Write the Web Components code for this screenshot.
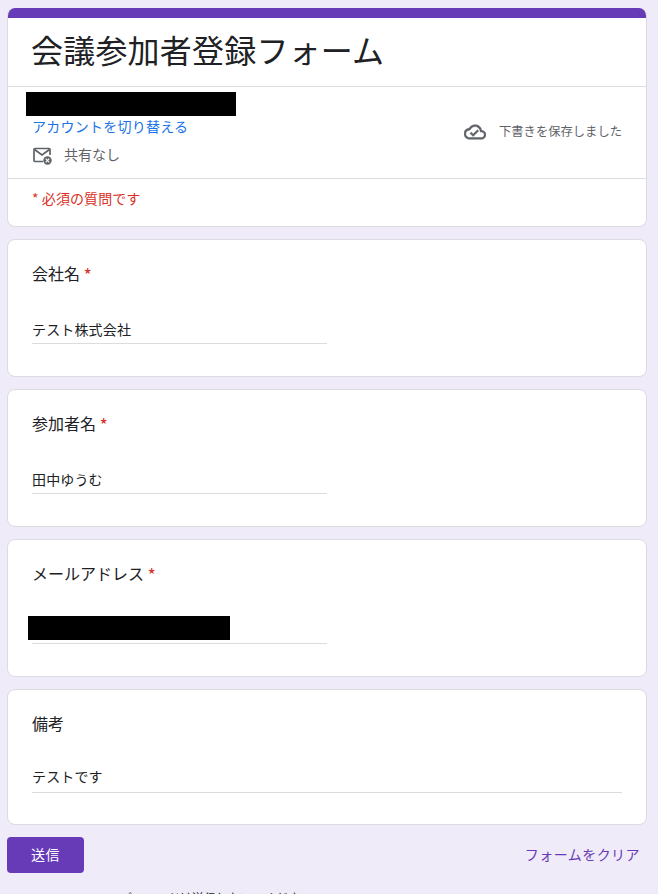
<!DOCTYPE html>
<html><head><meta charset="utf-8"><style>
html,body{margin:0;padding:0;height:894px;overflow:hidden;background:#f0ebf8;}
body{font-family:"Noto Sans CJK JP","Noto Sans",sans-serif;color:#202124;}
</style></head><body>
<form-page>
<form-header title-text="会議参加者登録フォーム"></form-header>
<form-question label="会社名" value="テスト株式会社" required></form-question>
<form-question label="参加者名" value="田中ゆうむ" required></form-question>
<form-question label="メールアドレス" redacted required></form-question>
<form-question label="備考" value="テストです" wide></form-question>
<form-actions></form-actions>
<form-note>パスワードは送信しないでください</form-note>
</form-page>
<script>
class FormPage extends HTMLElement{constructor(){super();this.attachShadow({mode:'open'}).innerHTML=`<style>:host{display:flex;flex-direction:column;gap:12px;padding:8px 11px 0 7px;width:640px}</style><slot></slot>`}}
class FormHeader extends HTMLElement{constructor(){super();const t=this.getAttribute('title-text');this.attachShadow({mode:'open'}).innerHTML=`<style>
:host{display:block;height:219px;box-sizing:border-box;background:#fff;border-radius:8px;border:1px solid #dadce0;border-top:0;overflow:hidden}
.bar{height:10px;background:#673ab7;margin:0 -1px}
h1{margin:0;height:69px;box-sizing:border-box;padding:0 0 0 23px;font-size:32px;font-weight:400;line-height:62px;letter-spacing:.2px;white-space:nowrap;border-bottom:1px solid #dadce0}
.acct{height:92px;box-sizing:border-box;border-bottom:1px solid #dadce0;display:flex;justify-content:space-between}
.left{padding:5px 0 0 18px;display:flex;flex-direction:column}
.redact{width:210px;height:24px;background:#000}
a{color:#1a73e8;font-size:14px;line-height:20px;margin:0 0 0 6px;letter-spacing:.25px;text-decoration:none}
.share{display:flex;align-items:center;gap:12px;margin:8px 0 0 7px;font-size:14px;color:#5f6368;height:20px}
.save{display:flex;align-items:center;gap:13px;font-size:12.3px;color:#5f6368;padding-right:24px;height:24px;margin-top:33px}
.save span{padding-bottom:2px}
.req{padding:9px 24px;font-size:14px;line-height:20px;letter-spacing:.08px;color:#d93025}
svg{display:block}
</style>
<div class="bar"></div><h1>${t}</h1>
<div class="acct"><div class="left"><div class="redact"></div><a href="#">アカウントを切り替える</a>
<div class="share"><svg width="19" height="18" viewBox="0 0 19 18" fill="none" style="margin-top:3px"><path d="M17 8V2.5a1 1 0 0 0-1-1H2a1 1 0 0 0-1 1v11a1 1 0 0 0 1 1h8" stroke="#5f6368" stroke-width="1.7"/><path d="M1.5 2.5L9 8l7.5-5.5" stroke="#5f6368" stroke-width="1.7"/><circle cx="14.5" cy="13.5" r="4.2" fill="#5f6368"/><path d="M12.7 11.7l3.6 3.6M16.3 11.7l-3.6 3.6" stroke="#fff" stroke-width="1.1"/></svg><span>共有なし</span></div></div>
<div class="save"><svg width="22" height="22" viewBox="0 0 24 24"><path fill="#5f6368" stroke="#5f6368" stroke-width=".5" d="M19.35 10.04A7.49 7.49 0 0 0 12 4C9.11 4 6.6 5.64 5.35 8.04A5.994 5.994 0 0 0 0 14c0 3.31 2.69 6 6 6h13c2.76 0 5-2.24 5-5 0-2.64-2.05-4.78-4.65-4.96zM19 18H6c-2.21 0-4-1.79-4-4 0-2.05 1.53-3.76 3.56-3.97l1.07-.11.5-.95A5.469 5.469 0 0 1 12 6c2.62 0 4.88 1.86 5.39 4.43l.3 1.5 1.53.11A2.98 2.98 0 0 1 22 15c0 1.65-1.35 3-3 3zm-9-3.82l-2.09-2.09L6.5 13.5 10 17l6.01-6.01-1.41-1.41z"/></svg><span>下書きを保存しました</span></div></div>
<div class="req">* 必須の質問です</div>`}}
class FormQuestion extends HTMLElement{constructor(){super();const l=this.getAttribute('label'),v=this.getAttribute('value')||'',r=this.hasAttribute('required'),red=this.hasAttribute('redacted'),w=this.hasAttribute('wide');this.attachShadow({mode:'open'}).innerHTML=`<style>
:host{display:block;height:${w?136:138}px;box-sizing:border-box;background:#fff;border:1px solid #dadce0;border-radius:8px;padding:21px 24px 0}
.q{font-size:16px;line-height:24px;height:24px;white-space:nowrap}
.q i{font-style:normal;color:#d93025;margin-left:3.5px;font-size:18px;vertical-align:-2px}
.in{width:${w?590:295}px;height:${w?58:59}px;box-sizing:border-box;border-bottom:1px solid #dadce0;font-size:14px;line-height:20px;letter-spacing:.15px;padding-top:${w?31:34}px;position:relative;white-space:nowrap}
.redact{position:absolute;left:-4px;top:31px;width:202px;height:24px;background:#000}
</style><div class="q">${l}${r?'<i>*</i>':''}</div><div class="in">${red?'<div class="redact"></div>':v}</div>`}}
class FormActions extends HTMLElement{constructor(){super();this.attachShadow({mode:'open'}).innerHTML=`<style>
:host{display:flex;justify-content:space-between;align-items:center;height:36px;font-size:14px}
button{width:77px;height:36px;border:0;border-radius:4px;background:#673ab7;color:#fff;font:inherit;padding:0 0 2px;letter-spacing:.5px}
a{color:#673ab7;text-decoration:none;margin-right:7px;letter-spacing:.45px;padding-bottom:2px}
</style><button type="button">送信</button><a href="#">フォームをクリア</a>`}}
class FormNote extends HTMLElement{constructor(){super();this.attachShadow({mode:'open'}).innerHTML=`<style>
:host{display:block;margin-top:5px;padding-left:113px;font-size:12px;line-height:16px;color:#202124;white-space:nowrap}
</style><slot></slot>`}}
customElements.define('form-page',FormPage);customElements.define('form-header',FormHeader);customElements.define('form-question',FormQuestion);customElements.define('form-actions',FormActions);customElements.define('form-note',FormNote);
</script></body></html>
